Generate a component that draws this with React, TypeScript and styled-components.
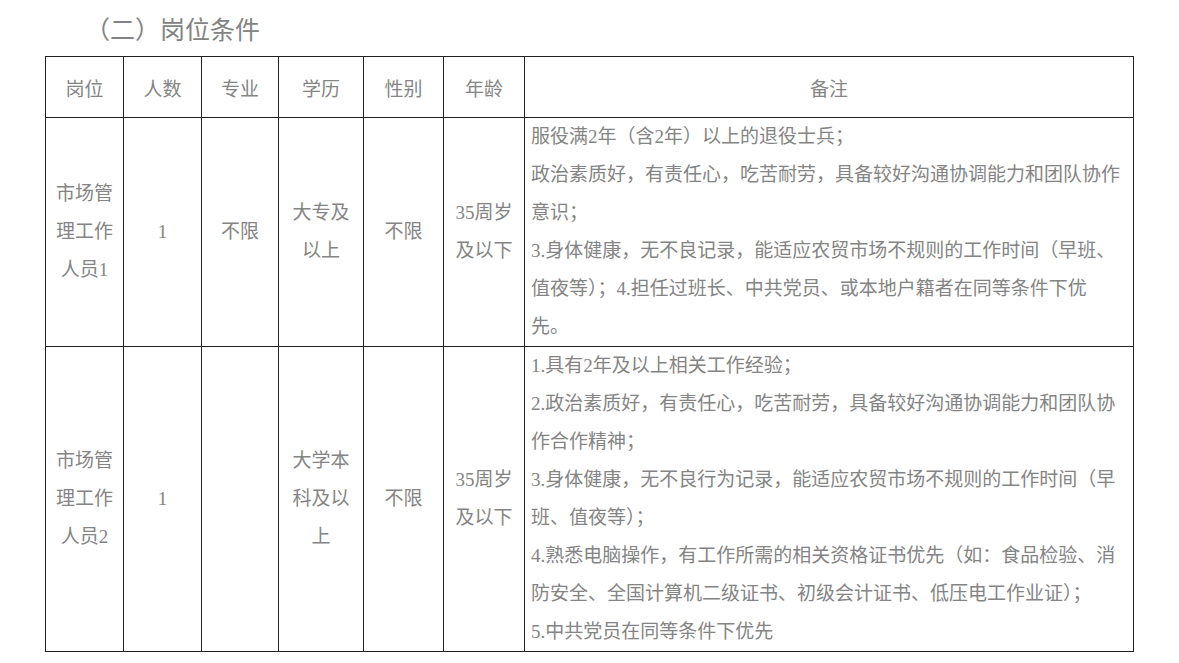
import type { FC } from "react";
import styled, { createGlobalStyle } from "styled-components";

const GlobalStyle = createGlobalStyle`
  html, body {
    margin: 0;
    padding: 0;
    background: #ffffff;
  }
`;

const serifStack = `"Liberation Serif", "Times New Roman", "Noto Sans CJK SC", serif`;

const Page = styled.div`
  padding: 8px 0 0 45px;
  font-family: ${serifStack};
  color: #808080;
`;

const Title = styled.h2`
  margin: 0 0 0 40px;
  height: 48px;
  font-family: "Noto Sans CJK SC", sans-serif;
  font-size: 25px;
  font-weight: 400;
  line-height: 40px;
  color: #838383;
`;

const Table = styled.table`
  border-collapse: collapse;
  table-layout: fixed;
  width: 1088px;
  border: 1.5px solid #666;
`;

const HeadCell = styled.th`
  height: 60px;
  padding: 0;
  border: 1px solid #222;
  font-size: 19px;
  font-weight: 400;
  font-family: "Noto Sans CJK SC", sans-serif;
  text-align: center;
  vertical-align: middle;
  color: #858585;
`;

const Cell = styled.td`
  padding: 0 9px;
  border: 1px solid #222;
  font-family: ${serifStack};
  font-size: 19px;
  font-weight: 400;
  line-height: 38px;
  text-align: center;
  vertical-align: middle;
  color: #848484;
`;

const NoteCell = styled(Cell)`
  padding: 0 6px;
  text-align: left;
  vertical-align: top;
`;

const Line = styled.div`
  white-space: nowrap;
`;

const cols = [78, 78, 77, 85, 80, 81, 609];

const headers = ["岗位", "人数", "专业", "学历", "性别", "年龄", "备注"];

type Row = {
  post: string;
  count: string;
  major: string;
  edu: string;
  gender: string;
  age: string;
  notes: string[];
};

const rows: Row[] = [
  {
    post: "市场管理工作人员1",
    count: "1",
    major: "不限",
    edu: "大专及以上",
    gender: "不限",
    age: "35周岁及以下",
    notes: [
      "服役满2年（含2年）以上的退役士兵；",
      "政治素质好，有责任心，吃苦耐劳，具备较好沟通协调能力和团队协作",
      "意识；",
      "3.身体健康，无不良记录，能适应农贸市场不规则的工作时间（早班、",
      "值夜等）；4.担任过班长、中共党员、或本地户籍者在同等条件下优",
      "先。",
    ],
  },
  {
    post: "市场管理工作人员2",
    count: "1",
    major: "",
    edu: "大学本科及以上",
    gender: "不限",
    age: "35周岁及以下",
    notes: [
      "1.具有2年及以上相关工作经验；",
      "2.政治素质好，有责任心，吃苦耐劳，具备较好沟通协调能力和团队协",
      "作合作精神；",
      "3.身体健康，无不良行为记录，能适应农贸市场不规则的工作时间（早",
      "班、值夜等）；",
      "4.熟悉电脑操作，有工作所需的相关资格证书优先（如：食品检验、消",
      "防安全、全国计算机二级证书、初级会计证书、低压电工作业证）；",
      "5.中共党员在同等条件下优先",
    ],
  },
];

const App: FC = () => {
  return (
    <Page>
      <GlobalStyle />
      <Title>（二）岗位条件</Title>
      <Table>
        <colgroup>
          {cols.map((w, i) => (
            <col key={i} style={{ width: w }} />
          ))}
        </colgroup>
        <thead>
          <tr>
            {headers.map((h) => (
              <HeadCell key={h}>{h}</HeadCell>
            ))}
          </tr>
        </thead>
        <tbody>
          {rows.map((row) => (
            <tr key={row.post}>
              <Cell>{row.post}</Cell>
              <Cell>{row.count}</Cell>
              <Cell>{row.major}</Cell>
              <Cell>{row.edu}</Cell>
              <Cell>{row.gender}</Cell>
              <Cell>{row.age}</Cell>
              <NoteCell>
                {row.notes.map((n, i) => (
                  <Line key={i}>{n}</Line>
                ))}
              </NoteCell>
            </tr>
          ))}
        </tbody>
      </Table>
    </Page>
  );
};

export default App;
